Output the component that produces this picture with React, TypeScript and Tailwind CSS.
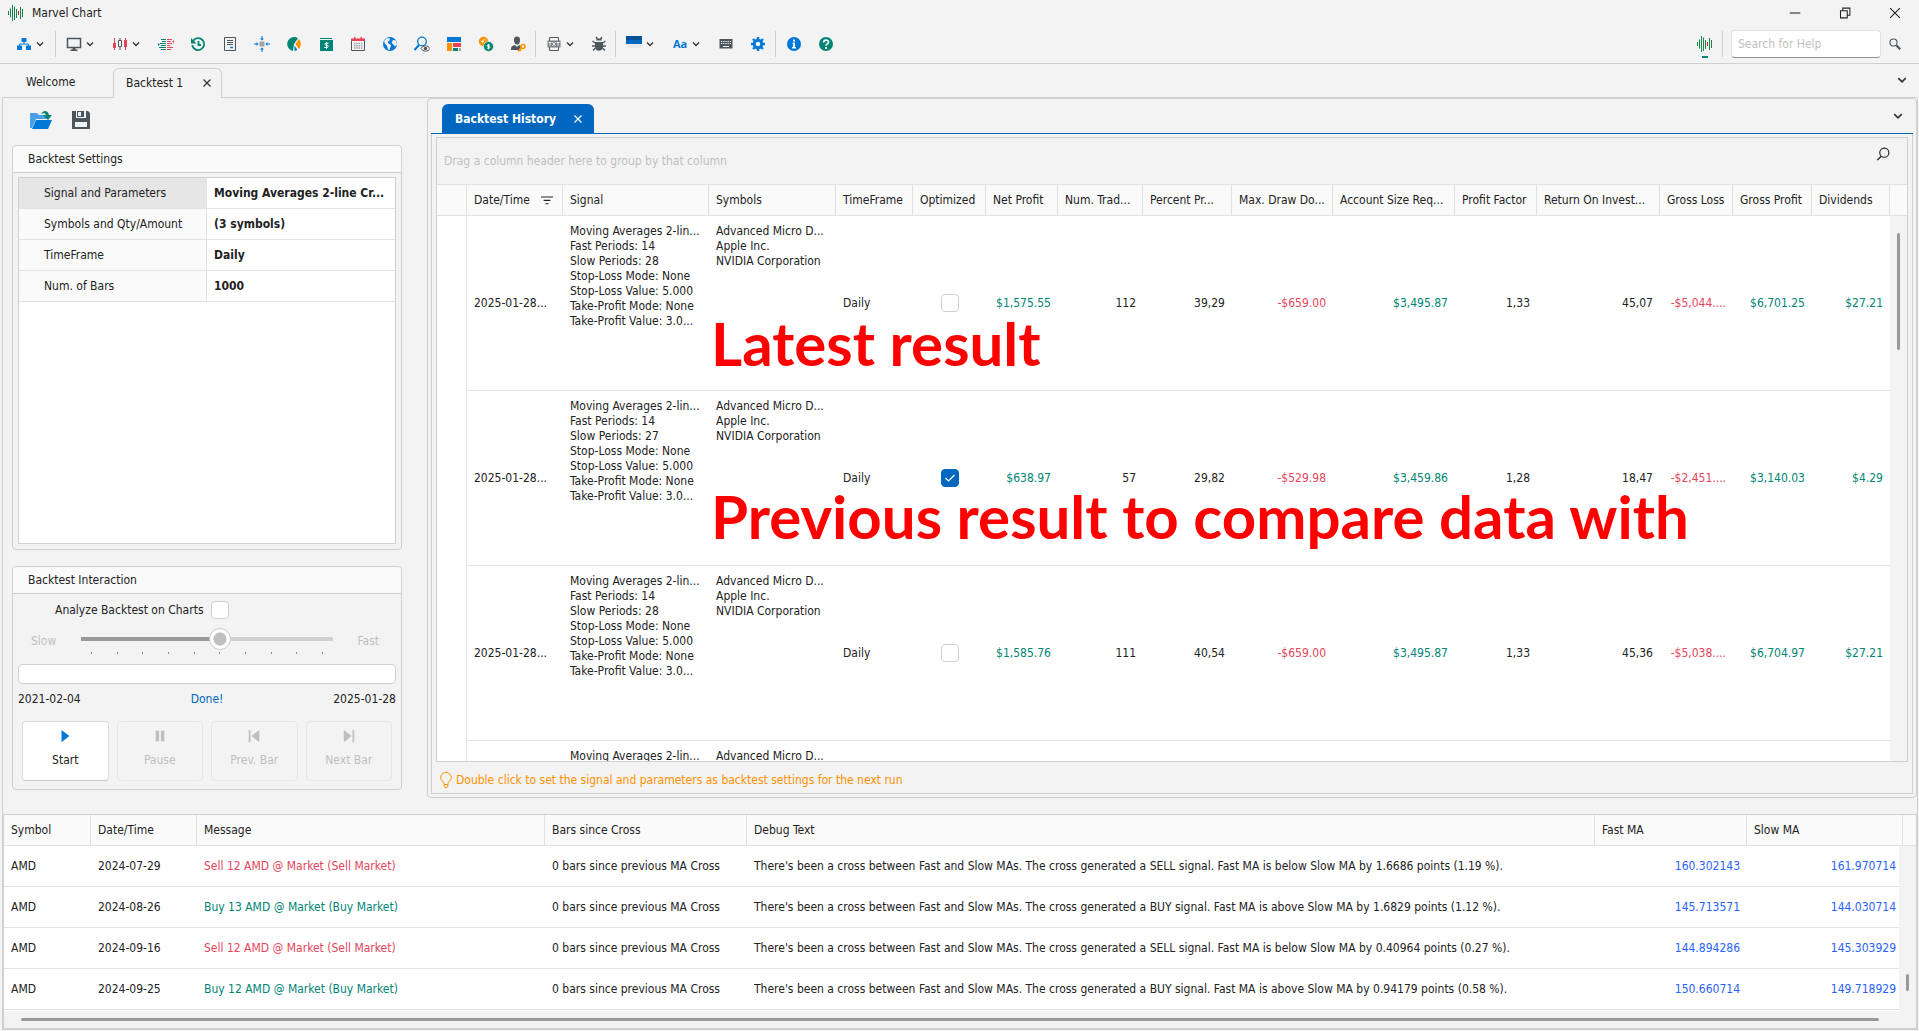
import type { ReactNode } from 'react';
import clsx from 'clsx';

const results = [
    { slow: 28, optimized: false, net: '$1,575.55', trades: '112', percent: '39,29', draw: '-$659.00', account: '$3,495.87', factor: '1,33', roi: '45,07', loss: '-$5,044....', profit: '$6,701.25', dividends: '$27.21' },
    { slow: 27, optimized: true, net: '$638.97', trades: '57', percent: '29,82', draw: '-$529.98', account: '$3,459.86', factor: '1,28', roi: '18,47', loss: '-$2,451....', profit: '$3,140.03', dividends: '$4.29' },
    { slow: 28, optimized: false, net: '$1,585.76', trades: '111', percent: '40,54', draw: '-$659.00', account: '$3,495.87', factor: '1,33', roi: '45,36', loss: '-$5,038....', profit: '$6,704.97', dividends: '$27.21' },
];

const messages = [
    { date: '2024-07-29', side: 'Sell', qty: 12, points: '1.6686', pct: '1.19', fast: '160.302143', slow: '161.970714' },
    { date: '2024-08-26', side: 'Buy', qty: 13, points: '1.6829', pct: '1.12', fast: '145.713571', slow: '144.030714' },
    { date: '2024-09-16', side: 'Sell', qty: 12, points: '0.40964', pct: '0.27', fast: '144.894286', slow: '145.303929' },
    { date: '2024-09-25', side: 'Buy', qty: 12, points: '0.94179', pct: '0.58', fast: '150.660714', slow: '149.718929' },
];

const settings = [
    ['Signal and Parameters', 'Moving Averages 2-line Cr...'],
    ['Symbols and Qty/Amount', '(3 symbols)'],
    ['TimeFrame', 'Daily'],
    ['Num. of Bars', '1000'],
];

const historyColumns = ['Signal', 'Symbols', 'TimeFrame', 'Optimized', 'Net Profit', 'Num. Trad...', 'Percent Pr...', 'Max. Draw Do...', 'Account Size Req...', 'Profit Factor', 'Return On Invest...', 'Gross Loss', 'Gross Profit', 'Dividends'];

function Icon({ children, className = 'size-4' }: { children: ReactNode; className?: string }) {
    return (
        <svg viewBox="0 0 16 16" className={clsx('shrink-0', className)} fill="none" aria-hidden="true">
            {children}
        </svg>
    );
}

function Chevron({ className }: { className: string }) {
    return (
        <Icon className={className}>
            <path d="M2 5l6 6 6-6" stroke="#333" strokeWidth="2.600" />
        </Icon>
    );
}

function Cross({ color = '#333' }: { color?: string }) {
    return (
        <Icon className="size-2">
            <path d="M1 1l14 14M15 1L1 15" stroke={color} strokeWidth="2.400" />
        </Icon>
    );
}

function Logo() {
    return (
        <Icon>
            <path d="M.5 6v4M2.500 3.500v9M4.500 0v16M6.500 1.500v13.500M8.500 4v9M12.500 2v12M14.500 4v8" stroke="#16824a" />
            <path d="M10.500 6v4" stroke="#d01818" />
        </Icon>
    );
}

const icons = {
    sitemap: (
        <Icon>
            <path d="M5.500 2h5v4h-5zM1 9.500h5V14H1zM10 9.500h5V14h-5z" fill="#0078d7" />
            <path d="M8 6v2M3.500 10V8h9v2" stroke="#0078d7" />
        </Icon>
    ),
    monitor: (
        <Icon>
            <path d="M1.500 2.500h13v9h-13z" stroke="#4d565d" strokeWidth="1.500" />
            <path d="M6.500 12h3v1.500h2V15h-7v-1.500h2z" fill="#4d565d" />
        </Icon>
    ),
    candles: (
        <Icon>
            <path d="M2.500 2v12M13.500 2v12" stroke="#e64559" />
            <path d="M1 7h3v5H1zM12 4h3v7h-3z" fill="#e64559" />
            <path d="M8 2v3M8 10.500V14M6.500 4.500h3v6h-3z" stroke="#4d565d" />
        </Icon>
    ),
    depth: (
        <Icon>
            <path d="M3 3.500h5M4 5.500h4M2 7.500h6M3 9.500h5M1 11.500h7M3 13.500h5" stroke="#008575" strokeWidth="1.200" />
            <path d="M9 3.500h5M9 5.500h4M9 7.500h5M9 9.500h3M9 11.500h6M9 13.500h4" stroke="#e64559" strokeWidth="1.200" />
            <path d="M0 7l2 1.500L0 10z" fill="#008575" />
            <path d="M16 4l-2 1.500L16 7z" fill="#e64559" />
        </Icon>
    ),
    history: (
        <Icon>
            <path d="M3 5a6 6 0 1 1-.8 4M8.500 5v4H11" stroke="#008575" strokeWidth="1.800" />
            <path d="M1 2v5.500h5.500z" fill="#008575" />
        </Icon>
    ),
    page: (
        <Icon>
            <path d="M2.500 1.500h11v13h-11zM5 4.500h6M5 6.500h6M5 8.500h6" stroke="#4d565d" />
            <path d="M8 11.500h3" stroke="#0078d7" strokeWidth="1.500" />
        </Icon>
    ),
    target: (
        <Icon>
            <path d="M5.500 5.500h5v5h-5z" fill="#a0a4a8" />
            <path d="M8 0v3M8 13v3M0 8h3M13 8h3" stroke="#0078d7" />
            <path d="M6 2.500h4L8 4.500zM6 13.500h4L8 11.500zM2.500 6v4L4.500 8zM13.500 6v4L11.500 8z" fill="#0078d7" />
        </Icon>
    ),
    pie: (
        <Icon>
            <path d="M8 1a7 7 0 0 0-1 13.900L8 8l4-5.700A7 7 0 0 0 8 1z" fill="#008575" />
            <path d="M12.800 3L9.500 8l3.300 5a7 7 0 0 0 0-10z" fill="#ff9100" />
            <path d="M8.500 9.500L11.500 14 8.500 15z" fill="#0078d7" />
        </Icon>
    ),
    ledger: (
        <Icon>
            <path d="M2 2.500h12" stroke="#008575" />
            <path d="M2 4h13v11H2z" fill="#008575" />
            <path d="M10.500 7.200H8c-1.500 0-1.500 2 0 2h1c1.700 0 1.700 2.200 0 2.200H6.200M8.500 6v6.800" stroke="#fff" />
        </Icon>
    ),
    calendar: (
        <Icon>
            <path d="M1.500 5v9.500h13V5" stroke="#4d565d" />
            <path d="M1 2.500h14V5H1zM4 1h1.500v2H4zM10.500 1H12v2h-1.500z" fill="#e64559" />
            <path d="M4 7.500h8.500M4 9.800h8.500M4 12h8.500" stroke="#a0a4a8" strokeWidth="1.400" strokeDasharray="1.500 .8" />
        </Icon>
    ),
    globe: (
        <Icon>
            <circle cx="8" cy="8" r="7" fill="#0078d7" />
            <path d="M2 5l3-3 3 .5-.5 2L5.500 6l1 1.500L9 9l-1.500 5L6 13.500 5 9.500 3 8zM11 4l3 .5 1 4-2 2-2-2.500-1.500-1z" fill="#f3f3f3" />
        </Icon>
    ),
    searchEye: (
        <Icon>
            <circle cx="8" cy="5.500" r="4.300" stroke="#0078d7" strokeWidth="1.300" />
            <path d="M5 9l-4.500 5" stroke="#0078d7" strokeWidth="2" />
            <path d="M7 12.500c2-3.500 7-3.500 9 0-2 3.500-7 3.500-9 0z" fill="#f3f3f3" stroke="#4d565d" />
            <circle cx="11.500" cy="12.500" r="1.700" fill="#4d565d" />
        </Icon>
    ),
    dashboard: (
        <Icon>
            <path d="M1 1h14v5H1z" fill="#0078d7" />
            <path d="M1 7h5v8H1z" fill="#ff9100" />
            <path d="M7 7h8v4H7z" fill="#e64559" />
            <path d="M7 12h5v3H7z" fill="#008575" />
            <path d="M13 12h2v3h-2z" fill="#a0a4a8" />
        </Icon>
    ),
    coins: (
        <Icon>
            <circle cx="5.500" cy="5.500" r="4.700" fill="#ff9100" />
            <circle cx="10.500" cy="10.500" r="5" fill="#008575" stroke="#f3f3f3" strokeWidth=".7" />
            <path d="M7.500 4c-2.500-1.500-4 2-2.500 3M3 5.500h3" stroke="#fff" />
            <path d="M12 9h-2c-1.300 0-1.300 1.500 0 1.500h1c1.300 0 1.300 1.700 0 1.700H9M10.500 8v5.500" stroke="#fff" strokeWidth=".9" />
        </Icon>
    ),
    userKey: (
        <Icon>
            <path d="M4 3.500C4-.5 10-.5 10 3.500S9 8.500 7 8.500 4 7 4 3.500zM1 14c0-4 1-4 4-5l2 2 2-2 2 1-2 4z" fill="#4d565d" />
            <circle cx="13" cy="10.500" r="2" stroke="#ff9100" strokeWidth="1.600" />
            <path d="M11.500 12L8 15.300M9.500 13.500l1.500 1.500" stroke="#ff9100" strokeWidth="1.600" />
        </Icon>
    ),
    txt: (
        <Icon>
            <path d="M3.500 5V1.500h9V5M3.500 11v3.500h9V11" stroke="#4d565d" />
            <path d="M1.500 4.500h13v7h-13z" fill="#7a8086" />
            <path d="M2.500 6.500h3M4 6.500V10M6.500 6l3 4M9.500 6l-3 4M10.500 6.500h3M12 6.500V10" stroke="#fff" strokeWidth=".9" />
        </Icon>
    ),
    bug: (
        <Icon>
            <path d="M5 4.500h6L10 2.500H6zM4 6h8v5c0 5-8 5-8 0z" fill="#4d565d" />
            <path d="M5 1l1.500 2M11 1L9.500 3M1.500 5L4 7M14.500 5L12 7M1 10h14M2 14.500L4.500 12M14 14.500L11.500 12" stroke="#4d565d" strokeWidth="1.300" />
        </Icon>
    ),
    theme: (
        <Icon>
            <path d="M0 0h16v4H0z" fill="#00529b" />
            <path d="M0 4h16v4H0z" fill="#0067c0" />
            <path d="M0 8h16v4H0z" fill="#e9e9e9" />
        </Icon>
    ),
    keyboard: (
        <Icon>
            <path d="M1.500 3h13v9.500h-13z" fill="#4d565d" />
            <path d="M3 5.500h10.500M3 7.500h10.500" stroke="#fff" strokeDasharray="1.200 1" />
            <path d="M5 10.500h6" stroke="#fff" />
        </Icon>
    ),
    gear: (
        <Icon>
            <circle cx="8" cy="8" r="3.800" stroke="#0078d7" strokeWidth="3" />
            <path d="M8 1v3M8 12v3M1 8h3M12 8h3M3 3l2 2M11 11l2 2M13 3l-2 2M5 11l-2 2" stroke="#0078d7" strokeWidth="2.400" />
        </Icon>
    ),
    info: (
        <Icon>
            <circle cx="8" cy="8" r="7" fill="#0078d7" />
            <path d="M7 3.500h2v2H7zM6.500 6.500H9v4.500h1v1.500H6V11h1V8h-.5z" fill="#fff" />
        </Icon>
    ),
    help: (
        <Icon>
            <circle cx="8" cy="8" r="7" fill="#008575" />
            <path d="M5.700 6.500c0-3 4.800-3 4.800-.3C10.500 8 8 7.800 8 9.800" stroke="#fff" strokeWidth="1.700" />
            <path d="M7 11h2v2H7z" fill="#fff" />
        </Icon>
    ),
};

function ToolButton({ icon, label }: { icon: ReactNode; label: string }) {
    return (
        <button type="button" aria-label={label} className="flex w-8 items-center justify-center">
            {icon}
        </button>
    );
}

function DropButton({ icon, label }: { icon: ReactNode; label: string }) {
    return (
        <button type="button" aria-label={label} className="flex w-[46px] items-center gap-1 pl-2">
            {icon}
            <Chevron className="size-2" />
        </button>
    );
}

function Separator() {
    return <div className="mx-px h-[26px] w-0.5 border-l border-[#d0d0d0]" />;
}

function TitleBar() {
    return (
        <header className="flex h-[26px] items-center pl-2">
            <Logo />
            <h1 className="ml-2 flex-1">Marvel Chart</h1>
            <button type="button" aria-label="Minimize" className="flex w-[50px] justify-center">
                <Icon className="size-3"><path d="M1 8h14" stroke="#222" strokeWidth="1.400" /></Icon>
            </button>
            <button type="button" aria-label="Restore" className="flex w-[50px] justify-center">
                <Icon className="size-3"><path d="M2 5h9v9.500H2zM5 4.500V1.500h9.500V11H11" stroke="#222" strokeWidth="1.400" /></Icon>
            </button>
            <button type="button" aria-label="Close" className="flex w-[49px] justify-center">
                <Icon className="size-3"><path d="M1.500 1.500l13 13M14.500 1.500l-13 13" stroke="#222" strokeWidth="1.500" /></Icon>
            </button>
        </header>
    );
}

function Toolbar() {
    return (
        <nav className="flex h-[38px] items-center border-b border-[#d0d0d0] pb-0.5 pl-2">
            <DropButton icon={icons.sitemap} label="Workspace" />
            <Separator />
            <DropButton icon={icons.monitor} label="Screens" />
            <DropButton icon={icons.candles} label="Chart" />
            <ToolButton icon={icons.depth} label="Market depth" />
            <ToolButton icon={icons.history} label="Backtest" />
            <ToolButton icon={icons.page} label="Report" />
            <ToolButton icon={icons.target} label="Target" />
            <ToolButton icon={icons.pie} label="Portfolio" />
            <ToolButton icon={icons.ledger} label="Account" />
            <ToolButton icon={icons.calendar} label="Calendar" />
            <ToolButton icon={icons.globe} label="Web" />
            <ToolButton icon={icons.searchEye} label="Screener" />
            <ToolButton icon={icons.dashboard} label="Dashboard" />
            <ToolButton icon={icons.coins} label="Currencies" />
            <ToolButton icon={icons.userKey} label="License" />
            <Separator />
            <DropButton icon={icons.txt} label="Export" />
            <button type="button" aria-label="Debug" className="flex w-[30px] items-center justify-center">{icons.bug}</button>
            <Separator />
            <DropButton icon={icons.theme} label="Theme" />
            <DropButton icon={<span className="w-4 font-['Open_Sans',sans-serif] text-[11px] font-bold text-[#0078d7]">Aa</span>} label="Font" />
            <ToolButton icon={icons.keyboard} label="Shortcuts" />
            <ToolButton icon={icons.gear} label="Settings" />
            <Separator />
            <ToolButton icon={icons.info} label="About" />
            <ToolButton icon={icons.help} label="Help" />
            <div className="ml-auto flex items-center">
                <button type="button" aria-label="Marvel Chart site" className="mr-2 flex flex-col items-center gap-1 pt-1.5">
                    <Logo />
                    <span className="h-0.5 w-1.5 bg-[#008575]" />
                </button>
                <Separator />
                <input
                    type="search"
                    aria-label="Search for Help"
                    placeholder="Search for Help"
                    className="ml-1.5 h-7 w-[150px] rounded border border-[#e0e0e0] border-b-[#909090] bg-white px-1.5 outline-none placeholder:text-[#bfbfbf]"
                />
                <button type="button" aria-label="Search" className="mr-[18px] ml-2">
                    <Icon className="size-3">
                        <circle cx="6" cy="6" r="4.700" stroke="#4d565d" strokeWidth="1.500" />
                        <path d="M10 10l5 5" stroke="#4d565d" strokeWidth="3" />
                    </Icon>
                </button>
            </div>
        </nav>
    );
}

function Tabs() {
    return (
        <div className="mx-0.5 flex h-[34px] items-end border-b border-[#d0d0d0]">
            <button type="button" className="h-[29px] w-[111px] pb-px pl-6 text-left">Welcome</button>
            <div className="-mb-px flex h-[30px] w-[109px] items-center rounded-t-md border border-b-0 border-[#d0d0d0] bg-[#f3f3f3] pb-0.5 pl-3">
                <button type="button" className="flex-1 text-left">Backtest 1</button>
                <button type="button" aria-label="Close Backtest 1" className="mr-2.5"><Cross /></button>
            </div>
            <button type="button" aria-label="More tabs" className="mr-2.5 mb-3 ml-auto"><Chevron className="size-2.5" /></button>
        </div>
    );
}

function SettingsGroup() {
    return (
        <section className="flex min-h-0 flex-1 flex-col rounded border border-[#d0d0d0]">
            <h2 className="h-[27px] shrink-0 rounded-t border-b border-[#d0d0d0] bg-[#fafafa] pl-[15px] leading-[27px]">Backtest Settings</h2>
            <div className="m-[5px] mt-1 flex-1 border border-[#d0d0d0] bg-white">
                <table className="w-full table-fixed border-separate border-spacing-0">
                    <tbody>
                        {settings.map(([label, value], i) => (
                            <tr key={label} className="h-[31px]">
                                <th className={clsx('w-1/2 border-r border-b border-[#e2e2e2] pl-[25px] text-left font-normal', i === 0 ? 'bg-[#e6e6e6]' : 'bg-[#fafafa]')}>{label}</th>
                                <td className="border-b border-[#e2e2e2] pl-[7px] font-bold whitespace-nowrap">{value}</td>
                            </tr>
                        ))}
                    </tbody>
                </table>
            </div>
        </section>
    );
}

function PlayerButton({ label, path, primary }: { label: string; path: string; primary?: boolean }) {
    return (
        <button
            type="button"
            disabled={!primary}
            className={clsx('flex h-[60px] flex-1 flex-col items-center gap-[9px] rounded border pt-[7px]', primary ? 'border-[#dcdcdc] border-b-[#c8c8c8] bg-white' : 'border-[#e6e6e6] text-[#bfbfbf]')}
        >
            <Icon className="h-[14px] w-4"><path d={path} fill={primary ? '#0078d7' : '#bfbfbf'} /></Icon>
            {label}
        </button>
    );
}

function InteractionGroup() {
    return (
        <section className="rounded border border-[#d0d0d0]">
            <h2 className="h-[27px] rounded-t border-b border-[#d0d0d0] bg-[#fafafa] pl-[15px] leading-[27px]">Backtest Interaction</h2>
            <div className="flex h-[195px] flex-col px-[5px] pt-[7px]">
                <label className="flex h-[18px] items-center gap-[7px] pl-[37px]">
                    Analyze Backtest on Charts
                    <input type="checkbox" className="size-[18px] appearance-none rounded border border-[#d0d0d0] bg-white" />
                </label>
                <div className="mt-[9px] flex h-[30px] text-[#bfbfbf]">
                    <label htmlFor="speed" className="w-[63px] pt-[5px] pl-[13px]">Slow</label>
                    <div className="flex-1">
                        <input
                            id="speed"
                            type="range"
                            min={1}
                            max={10}
                            defaultValue={6}
                            disabled
                            className="block h-[22px] w-full appearance-none bg-[linear-gradient(90deg,#999_55%,#d0d0d0_55%)] bg-[length:100%_4px] bg-center bg-no-repeat [&::-webkit-slider-thumb]:size-[22px] [&::-webkit-slider-thumb]:appearance-none [&::-webkit-slider-thumb]:rounded-full [&::-webkit-slider-thumb]:border [&::-webkit-slider-thumb]:border-[#ccc] [&::-webkit-slider-thumb]:bg-[radial-gradient(circle,#c0c0c0_6px,#fff_7px)]"
                        />
                        <div className="mt-0.5 flex justify-between px-2.5">
                            {Array.from({ length: 10 }, (_, i) => <span key={i} className="h-0.5 w-px bg-[#888]" />)}
                        </div>
                    </div>
                    <span className="w-[63px] pt-[5px] pr-[17px] text-right">Fast</span>
                </div>
                <div role="progressbar" aria-label="Backtest progress" className="mt-1.5 h-5 rounded border border-[#d0d0d0] bg-white" />
                <div className="flex h-[29px] items-center justify-between">
                    <span>2021-02-04</span>
                    <span className="text-[#0067c0]">Done!</span>
                    <span>2025-01-28</span>
                </div>
                <div className="mx-1 mt-2 flex gap-2">
                    <PlayerButton label="Start" path="M4 1l9 7-9 7z" primary />
                    <PlayerButton label="Pause" path="M3 2h4v12H3zM9 2h4v12H9z" />
                    <PlayerButton label="Prev. Bar" path="M2 1h2v14H2zM14 1v14L5 8z" />
                    <PlayerButton label="Next Bar" path="M12 1h2v14h-2zM2 1v14l9-7z" />
                </div>
            </div>
        </section>
    );
}

function Optimized({ checked }: { checked: boolean }) {
    return (
        <span className="relative inline-block size-[18px] align-middle">
            <input type="checkbox" aria-label="Optimized" defaultChecked={checked} className="block size-[18px] appearance-none rounded border border-[#d0d0d0] bg-white checked:border-[#0067c0] checked:bg-[#0067c0]" />
            {checked && (
                <Icon className="pointer-events-none absolute top-px left-px size-4"><path d="M3.500 8l3 3 6-6" stroke="#fff" strokeWidth="1.200" /></Icon>
            )}
        </span>
    );
}

function HistoryTable() {
    const th = 'overflow-hidden border-r border-[#e2e2e2] pl-[7px] text-left font-normal whitespace-nowrap';
    const num = 'pr-[7px] text-right whitespace-nowrap';
    const lines = 'overflow-hidden pt-2 pl-[7px] align-top leading-[15px] whitespace-nowrap';
    return (
        <table className="w-full table-fixed border-separate border-spacing-0">
            <colgroup>
                <col className="w-[30px]" /><col className="w-24" /><col /><col className="w-[127px]" />
                <col className="w-[77px]" /><col className="w-[73px]" /><col className="w-[72px]" /><col className="w-[85px]" />
                <col className="w-[89px]" /><col className="w-[101px]" /><col className="w-[122px]" /><col className="w-[82px]" />
                <col className="w-[123px]" /><col className="w-[73px]" /><col className="w-[79px]" /><col className="w-[78px]" />
                <col className="w-[17px]" />
            </colgroup>
            <thead>
                <tr className="h-8 bg-[#fafafa] [&>th]:border-y [&>th]:border-[#e2e2e2]">
                    <th className="border-r" aria-label="Row" />
                    <th className={th}>
                        <span className="flex items-center justify-between pr-[9px]">
                            Date/Time
                            <Icon className="size-3"><path d="M0 4h16M3.500 8.500h9M6 13h4" stroke="#222" strokeWidth="1.500" /></Icon>
                        </span>
                    </th>
                    {historyColumns.map((c) => <th key={c} className={th}>{c}</th>)}
                    <th aria-label="Scroll" />
                </tr>
            </thead>
            <tbody className="bg-white">
                {results.map((r, i) => (
                    <tr key={i} className="h-[175px] [&>td]:border-b [&>td]:border-[#e2e2e2]">
                        <td className="border-r border-b-white!" />
                        <td className="pl-[7px] whitespace-nowrap">2025-01-28...</td>
                        <td className={lines}>
                            Moving Averages 2-lin...<br />
                            Fast Periods: 14<br />
                            Slow Periods: {r.slow}<br />
                            Stop-Loss Mode: None<br />
                            Stop-Loss Value: 5.000<br />
                            Take-Profit Mode: None<br />
                            Take-Profit Value: 3.0...
                        </td>
                        <td className={lines}>
                            Advanced Micro D...<br />
                            Apple Inc.<br />
                            NVIDIA Corporation
                        </td>
                        <td className="pl-[7px]">Daily</td>
                        <td className="text-center"><Optimized checked={r.optimized} /></td>
                        <td className={clsx(num, 'text-[#008575]')}>{r.net}</td>
                        <td className={num}>{r.trades}</td>
                        <td className={num}>{r.percent}</td>
                        <td className={clsx(num, 'text-[#e64559]')}>{r.draw}</td>
                        <td className={clsx(num, 'text-[#008575]')}>{r.account}</td>
                        <td className={num}>{r.factor}</td>
                        <td className={num}>{r.roi}</td>
                        <td className={clsx(num, 'text-[#e64559]')}>{r.loss}</td>
                        <td className={clsx(num, 'text-[#008575]')}>{r.profit}</td>
                        <td className={clsx(num, 'text-[#008575]')}>{r.dividends}</td>
                        <td className="border-b-[#f3f3f3]! bg-[#f3f3f3]" />
                    </tr>
                ))}
                <tr className="h-[175px]">
                    <td className="border-r border-[#e2e2e2]" />
                    <td />
                    <td className={lines}>Moving Averages 2-lin...</td>
                    <td className={lines}>Advanced Micro D...</td>
                    <td colSpan={12} />
                    <td className="bg-[#f3f3f3]" />
                </tr>
            </tbody>
        </table>
    );
}

function HistoryPanel() {
    return (
        <section className="flex min-w-0 flex-1 flex-col rounded border border-[#d0d0d0] p-[3px] pt-0">
            <div className="flex h-[35px] shrink-0 items-end border-b border-[#0067c0]">
                <div className="ml-[11px] flex h-[29px] w-[152px] items-center rounded-t-md bg-[#0067c0] pl-[13px] font-bold text-white">
                    <button type="button" className="flex-1 text-left whitespace-nowrap">Backtest History</button>
                    <button type="button" aria-label="Close Backtest History" className="mr-3"><Cross color="#fff" /></button>
                </div>
                <button type="button" aria-label="More tabs" className="mr-2.5 mb-3 ml-auto"><Chevron className="size-2.5" /></button>
            </div>
            <div className="flex min-h-0 flex-1 flex-col border border-t-0 border-[#d0d0d0] px-1 pt-[3px]">
                <div className="relative min-h-0 flex-1 overflow-hidden border border-[#d0d0d0]">
                    <div className="flex h-[46px] items-center justify-between pr-[17px] pl-[7px] text-[#bfbfbf]">
                        Drag a column header here to group by that column
                        <button type="button" aria-label="Find" className="pb-3.5">
                            <Icon className="size-3.5">
                                <circle cx="9.500" cy="6.500" r="5.200" stroke="#222" strokeWidth="1.300" />
                                <path d="M6 10.500L1.500 15" stroke="#222" strokeWidth="1.500" />
                            </Icon>
                        </button>
                    </div>
                    <HistoryTable />
                    <div className="absolute top-[95px] right-[7px] h-[117px] w-[3px] rounded bg-[#999]" />
                    <p className="absolute top-[169px] left-[274px] font-['Lato',sans-serif] text-[60px] leading-[72px] font-bold whitespace-nowrap text-[#ff0000]">Latest result</p>
                    <p className="absolute top-[342px] left-[274px] font-['Lato',sans-serif] text-[60px] leading-[72px] font-bold whitespace-nowrap text-[#ff0000]">Previous result to compare data with</p>
                </div>
                <p className="flex h-[31px] shrink-0 items-center gap-1 pt-1 pl-1 text-[#ff9100]">
                    <svg viewBox="0 0 12 16" className="h-4 w-3" fill="none" stroke="#ff9100">
                        <path d="M4 12.500v-2C-2 6.500 1 .5 6 .5s8 6 2 10v2zM4 13v1l1 1.500h2L8 14v-1" />
                    </svg>
                    Double click to set the signal and parameters as backtest settings for the next run
                </p>
            </div>
        </section>
    );
}

function MessageLog() {
    const th = 'border-r border-b border-[#e2e2e2] pl-[7px] text-left font-normal';
    return (
        <section className="relative h-[216px] shrink-0 overflow-hidden border border-b-2 border-[#d0d0d0] bg-white">
            <table className="w-full table-fixed border-separate border-spacing-0">
                <colgroup>
                    <col className="w-[87px]" /><col className="w-[106px]" /><col className="w-[348px]" /><col className="w-[202px]" />
                    <col /><col className="w-[152px]" /><col className="w-[156px]" /><col className="w-[13px]" />
                </colgroup>
                <thead>
                    <tr className="h-[31px] bg-[#fafafa]">
                        {['Symbol', 'Date/Time', 'Message', 'Bars since Cross', 'Debug Text', 'Fast MA', 'Slow MA'].map((c) => <th key={c} className={th}>{c}</th>)}
                        <th className="border-b border-[#e2e2e2]" aria-label="Scroll" />
                    </tr>
                </thead>
                <tbody>
                    {messages.map((m) => {
                        const sell = m.side === 'Sell';
                        return (
                            <tr key={m.date} className="h-[41px] [&>td]:border-b [&>td]:border-[#e2e2e2] [&>td]:pl-[7px] [&>td]:whitespace-nowrap">
                                <td>AMD</td>
                                <td>{m.date}</td>
                                <td className={sell ? 'text-[#e64559]' : 'text-[#008575]'}>{`${m.side} ${m.qty} AMD @ Market (${m.side} Market)`}</td>
                                <td>0 bars since previous MA Cross</td>
                                <td>{`There's been a cross between Fast and Slow MAs. The cross generated a ${m.side.toUpperCase()} signal. Fast MA is ${sell ? 'below' : 'above'} Slow MA by ${m.points} points (${m.pct} %).`}</td>
                                <td className="pr-[7px] text-right text-[#2962ff]">{m.fast}</td>
                                <td className="pr-[7px] text-right text-[#2962ff]">{m.slow}</td>
                                <td />
                            </tr>
                        );
                    })}
                </tbody>
            </table>
            <div className="absolute top-[31px] right-0 bottom-0 w-[17px] bg-[#f3f3f3]">
                <div className="mt-32 ml-[7px] h-[17px] w-[3px] rounded bg-[#999]" />
            </div>
            <div className="absolute inset-x-0 bottom-0 h-[17px] bg-[#f3f3f3] px-[17px] pt-[7px]">
                <div className="mr-5 h-[3px] rounded bg-[#999]" />
            </div>
        </section>
    );
}

export default function App() {
    return (
        <div className="flex h-screen flex-col overflow-hidden bg-[#f3f3f3] pb-px font-['DejaVu_Sans_Condensed','DejaVu_Sans',sans-serif] text-[12px] leading-4 text-[#222]">
            <TitleBar />
            <Toolbar />
            <Tabs />
            <main className="mr-px ml-0.5 flex min-h-0 flex-1 flex-col border-x border-[#d0d0d0]">
                <div className="flex min-h-0 flex-1 pb-4">
                    <aside className="flex w-[424px] shrink-0 flex-col pr-[25px] pb-2 pl-[9px]">
                        <div className="flex h-[47px] shrink-0 items-center gap-[19px] pb-1 pl-[17px]">
                            <button type="button" aria-label="Open">
                                <svg viewBox="0 0 24 20" className="h-5 w-6">
                                    <path d="M1 3h7l2 2h8v4H7L3 18H1z" fill="#4aa0e6" />
                                    <path d="M7 10h16l-4 9H3z" fill="#0078d7" />
                                    <path d="M12 4c2-4 7-4 8 1h3l-4 5-5-5h3c-1-2-3-2-5-1z" fill="#008575" />
                                </svg>
                            </button>
                            <button type="button" aria-label="Save">
                                <svg viewBox="0 0 18 18" className="size-[18px]">
                                    <path d="M0 0h4v7h10V0h2l2 2v16H0z" fill="#4d565d" />
                                    <path d="M5 0h7v6H5z" fill="#4d565d" />
                                    <path d="M6 1h3v4H6zM3 11h12v5H3z" fill="#f3f3f3" />
                                </svg>
                            </button>
                        </div>
                        <SettingsGroup />
                        <div className="h-4 shrink-0" />
                        <InteractionGroup />
                    </aside>
                    <HistoryPanel />
                </div>
                <MessageLog />
            </main>
        </div>
    );
}
